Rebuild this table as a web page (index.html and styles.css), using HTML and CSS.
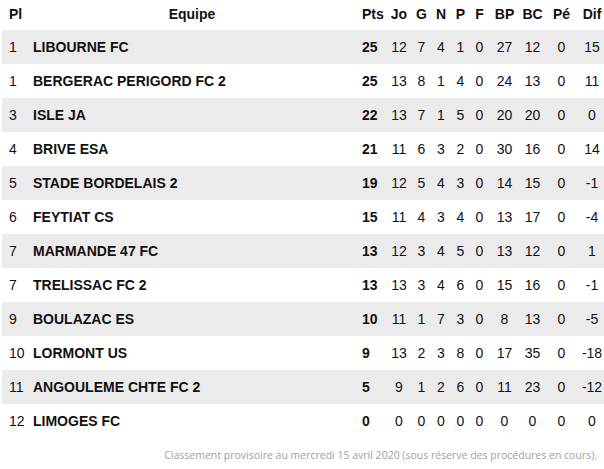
FILE: index.html
```html
<!DOCTYPE html>
<html lang="fr">
<head>
<meta charset="utf-8">
<title>Classement</title>
<link rel="stylesheet" href="styles.css">
</head>
<body>
<div class="ranking">
  <table class="standings">
    <colgroup>
      <col class="c-pl"><col class="c-team"><col class="c-pts"><col class="c-jo"><col class="c-g"><col class="c-n"><col class="c-p"><col class="c-f"><col class="c-bp"><col class="c-bc"><col class="c-pe"><col class="c-dif">
    </colgroup>
    <thead>
      <tr><th class="pl">Pl</th><th class="team-h">Equipe</th><th class="pts">Pts</th><th>Jo</th><th>G</th><th>N</th><th>P</th><th>F</th><th>BP</th><th>BC</th><th>Pé</th><th>Dif</th></tr>
    </thead>
    <tbody>
      <tr><td class="pl">1</td><td class="team">LIBOURNE FC</td><td class="pts">25</td><td>12</td><td>7</td><td>4</td><td>1</td><td>0</td><td>27</td><td>12</td><td>0</td><td>15</td></tr>
      <tr><td class="pl">1</td><td class="team">BERGERAC PERIGORD FC 2</td><td class="pts">25</td><td>13</td><td>8</td><td>1</td><td>4</td><td>0</td><td>24</td><td>13</td><td>0</td><td>11</td></tr>
      <tr><td class="pl">3</td><td class="team">ISLE JA</td><td class="pts">22</td><td>13</td><td>7</td><td>1</td><td>5</td><td>0</td><td>20</td><td>20</td><td>0</td><td>0</td></tr>
      <tr><td class="pl">4</td><td class="team">BRIVE ESA</td><td class="pts">21</td><td>11</td><td>6</td><td>3</td><td>2</td><td>0</td><td>30</td><td>16</td><td>0</td><td>14</td></tr>
      <tr><td class="pl">5</td><td class="team">STADE BORDELAIS 2</td><td class="pts">19</td><td>12</td><td>5</td><td>4</td><td>3</td><td>0</td><td>14</td><td>15</td><td>0</td><td>-1</td></tr>
      <tr><td class="pl">6</td><td class="team">FEYTIAT CS</td><td class="pts">15</td><td>11</td><td>4</td><td>3</td><td>4</td><td>0</td><td>13</td><td>17</td><td>0</td><td>-4</td></tr>
      <tr><td class="pl">7</td><td class="team">MARMANDE 47 FC</td><td class="pts">13</td><td>12</td><td>3</td><td>4</td><td>5</td><td>0</td><td>13</td><td>12</td><td>0</td><td>1</td></tr>
      <tr><td class="pl">7</td><td class="team">TRELISSAC FC 2</td><td class="pts">13</td><td>13</td><td>3</td><td>4</td><td>6</td><td>0</td><td>15</td><td>16</td><td>0</td><td>-1</td></tr>
      <tr><td class="pl">9</td><td class="team">BOULAZAC ES</td><td class="pts">10</td><td>11</td><td>1</td><td>7</td><td>3</td><td>0</td><td>8</td><td>13</td><td>0</td><td>-5</td></tr>
      <tr><td class="pl">10</td><td class="team">LORMONT US</td><td class="pts">9</td><td>13</td><td>2</td><td>3</td><td>8</td><td>0</td><td>17</td><td>35</td><td>0</td><td>-18</td></tr>
      <tr><td class="pl">11</td><td class="team">ANGOULEME CHTE FC 2</td><td class="pts">5</td><td>9</td><td>1</td><td>2</td><td>6</td><td>0</td><td>11</td><td>23</td><td>0</td><td>-12</td></tr>
      <tr><td class="pl">12</td><td class="team">LIMOGES FC</td><td class="pts">0</td><td>0</td><td>0</td><td>0</td><td>0</td><td>0</td><td>0</td><td>0</td><td>0</td><td>0</td></tr>
    </tbody>
  </table>
  <p class="note">Classement provisoire au mercredi 15 avril 2020 (sous réserve des procédures en cours).</p>
</div>
</body>
</html>
```

FILE: styles.css
```css
html, body {
  margin: 0;
  padding: 0;
  background: #ffffff;
}

.ranking {
  padding: 0 0 0 2px;
  font-family: "Liberation Sans", Arial, sans-serif;
  color: #111111;
}

.standings {
  width: 602px;
  table-layout: fixed;
  border-collapse: collapse;
  font-size: 14px;
}

.c-pl { width: 26px; }
.c-team { width: 328px; }
.c-pts { width: 32px; }
.c-jo { width: 22px; }
.c-g { width: 23px; }
.c-n { width: 16px; }
.c-p { width: 23px; }
.c-f { width: 15px; }
.c-bp { width: 35px; }
.c-bc { width: 21px; }
.c-pe { width: 37px; }
.c-dif { width: 24px; }

.standings th,
.standings td {
  padding: 0;
  text-align: center;
  white-space: nowrap;
}

.standings th {
  height: 30px;
  padding-bottom: 1px;
  font-weight: bold;
  vertical-align: top;
  padding-top: 6px;
  box-sizing: border-box;
}

.standings td {
  height: 34px;
}

.standings tbody tr:nth-child(odd) {
  background: #ebebeb;
}

.standings .pl {
  text-align: left;
  padding-left: 7px;
}

.standings .team {
  text-align: left;
  padding-left: 5px;
  font-weight: bold;
}

.standings .team-h {
  text-align: center;
}

.standings .pts {
  text-align: left;
  padding-left: 6px;
  font-weight: bold;
}

.note {
  margin: 10px 0 0;
  padding-right: 7px;
  text-align: right;
  font-family: "Open Sans", sans-serif;
  font-size: 10.5px;
  color: #a0a0a0;
}
```
